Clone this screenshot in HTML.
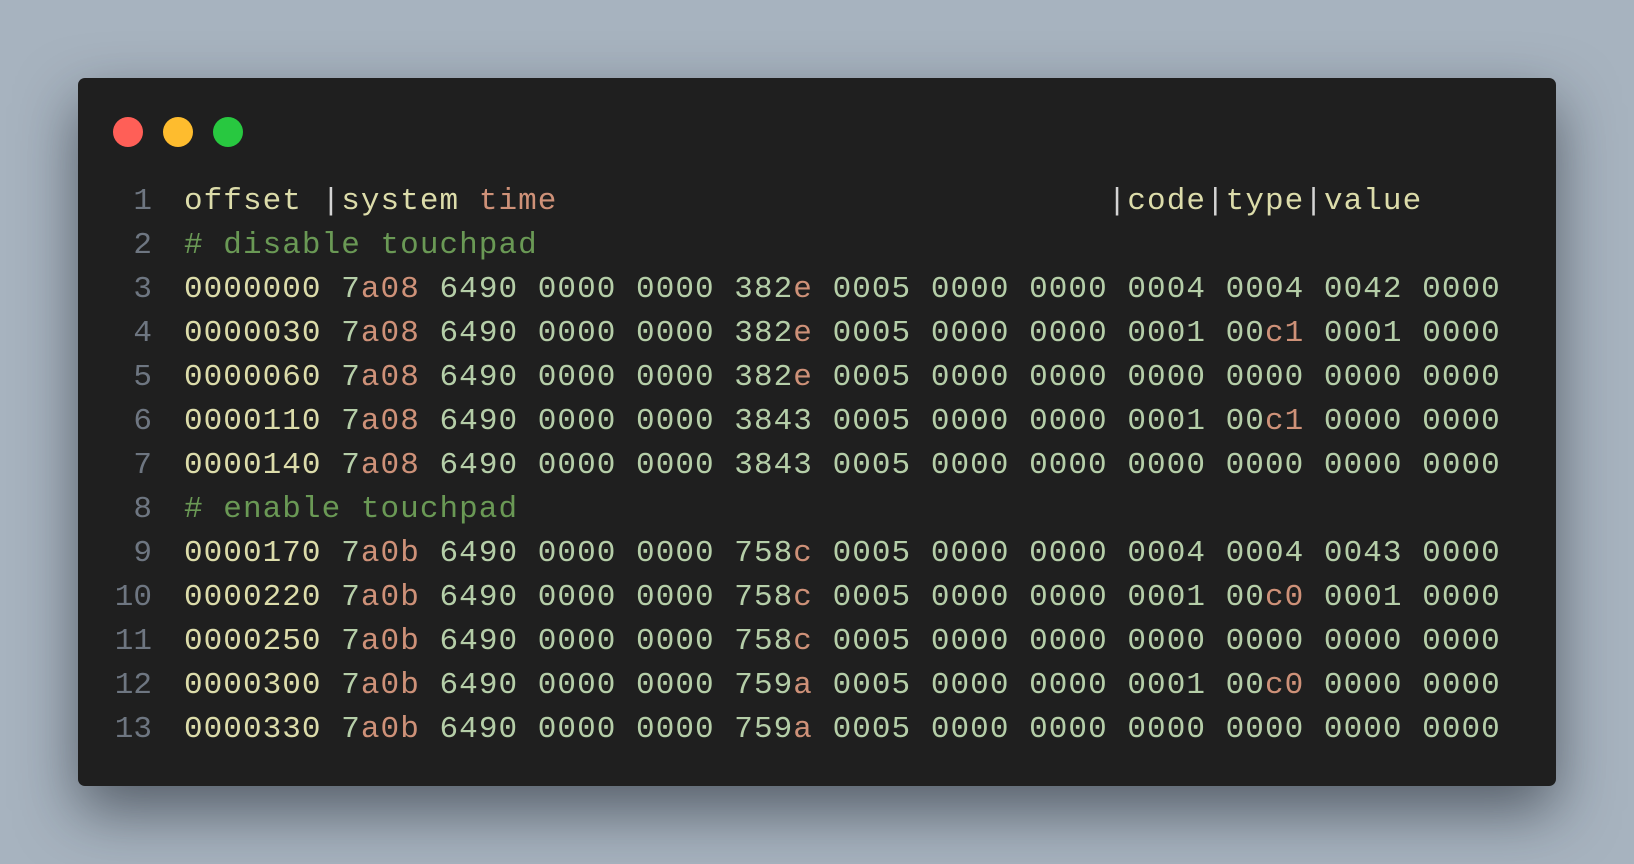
<!DOCTYPE html>
<html><head><style>
html,body{margin:0;padding:0}
body{width:1634px;height:864px;background:#a7b3bf;position:relative;overflow:hidden}
.win{position:absolute;left:78px;top:78px;width:1478px;height:708px;background:#1f1f1f;border-radius:7px;box-shadow:0 25px 60px rgba(20,25,35,.55)}
.dot{position:absolute;top:117px;width:30px;height:30px;border-radius:50%}
pre{position:absolute;left:0;top:180px;margin:0;font-family:"Liberation Mono",monospace;font-size:31px;letter-spacing:1.05px;line-height:44px;color:#b5cea8}
.n{display:inline-block;width:152px;text-align:right;padding-right:32px;color:#6e7681;letter-spacing:0}
.y{color:#dcdcaa}.o{color:#ce9178}.c{color:#6a9955}.p{color:#d4d4d4}
</style></head><body>
<div class="win"></div>
<div class="dot" style="left:113px;background:#ff5f57"></div>
<div class="dot" style="left:163px;background:#febc2e"></div>
<div class="dot" style="left:213px;background:#28c840"></div>
<pre><span class="n">1</span><span class="y">offset <span class="p">|</span>system <span class="o">time</span>                            <span class="p">|</span>code<span class="p">|</span>type<span class="p">|</span>value</span>
<span class="n">2</span><span class="c"># disable touchpad</span>
<span class="n">3</span><span class="y">0000000</span> 7<span class="o">a08</span> 6490 0000 0000 382<span class="o">e</span> 0005 0000 0000 0004 0004 0042 0000
<span class="n">4</span><span class="y">0000030</span> 7<span class="o">a08</span> 6490 0000 0000 382<span class="o">e</span> 0005 0000 0000 0001 00<span class="o">c1</span> 0001 0000
<span class="n">5</span><span class="y">0000060</span> 7<span class="o">a08</span> 6490 0000 0000 382<span class="o">e</span> 0005 0000 0000 0000 0000 0000 0000
<span class="n">6</span><span class="y">0000110</span> 7<span class="o">a08</span> 6490 0000 0000 3843 0005 0000 0000 0001 00<span class="o">c1</span> 0000 0000
<span class="n">7</span><span class="y">0000140</span> 7<span class="o">a08</span> 6490 0000 0000 3843 0005 0000 0000 0000 0000 0000 0000
<span class="n">8</span><span class="c"># enable touchpad</span>
<span class="n">9</span><span class="y">0000170</span> 7<span class="o">a0b</span> 6490 0000 0000 758<span class="o">c</span> 0005 0000 0000 0004 0004 0043 0000
<span class="n">10</span><span class="y">0000220</span> 7<span class="o">a0b</span> 6490 0000 0000 758<span class="o">c</span> 0005 0000 0000 0001 00<span class="o">c0</span> 0001 0000
<span class="n">11</span><span class="y">0000250</span> 7<span class="o">a0b</span> 6490 0000 0000 758<span class="o">c</span> 0005 0000 0000 0000 0000 0000 0000
<span class="n">12</span><span class="y">0000300</span> 7<span class="o">a0b</span> 6490 0000 0000 759<span class="o">a</span> 0005 0000 0000 0001 00<span class="o">c0</span> 0000 0000
<span class="n">13</span><span class="y">0000330</span> 7<span class="o">a0b</span> 6490 0000 0000 759<span class="o">a</span> 0005 0000 0000 0000 0000 0000 0000</pre>
</body></html>
